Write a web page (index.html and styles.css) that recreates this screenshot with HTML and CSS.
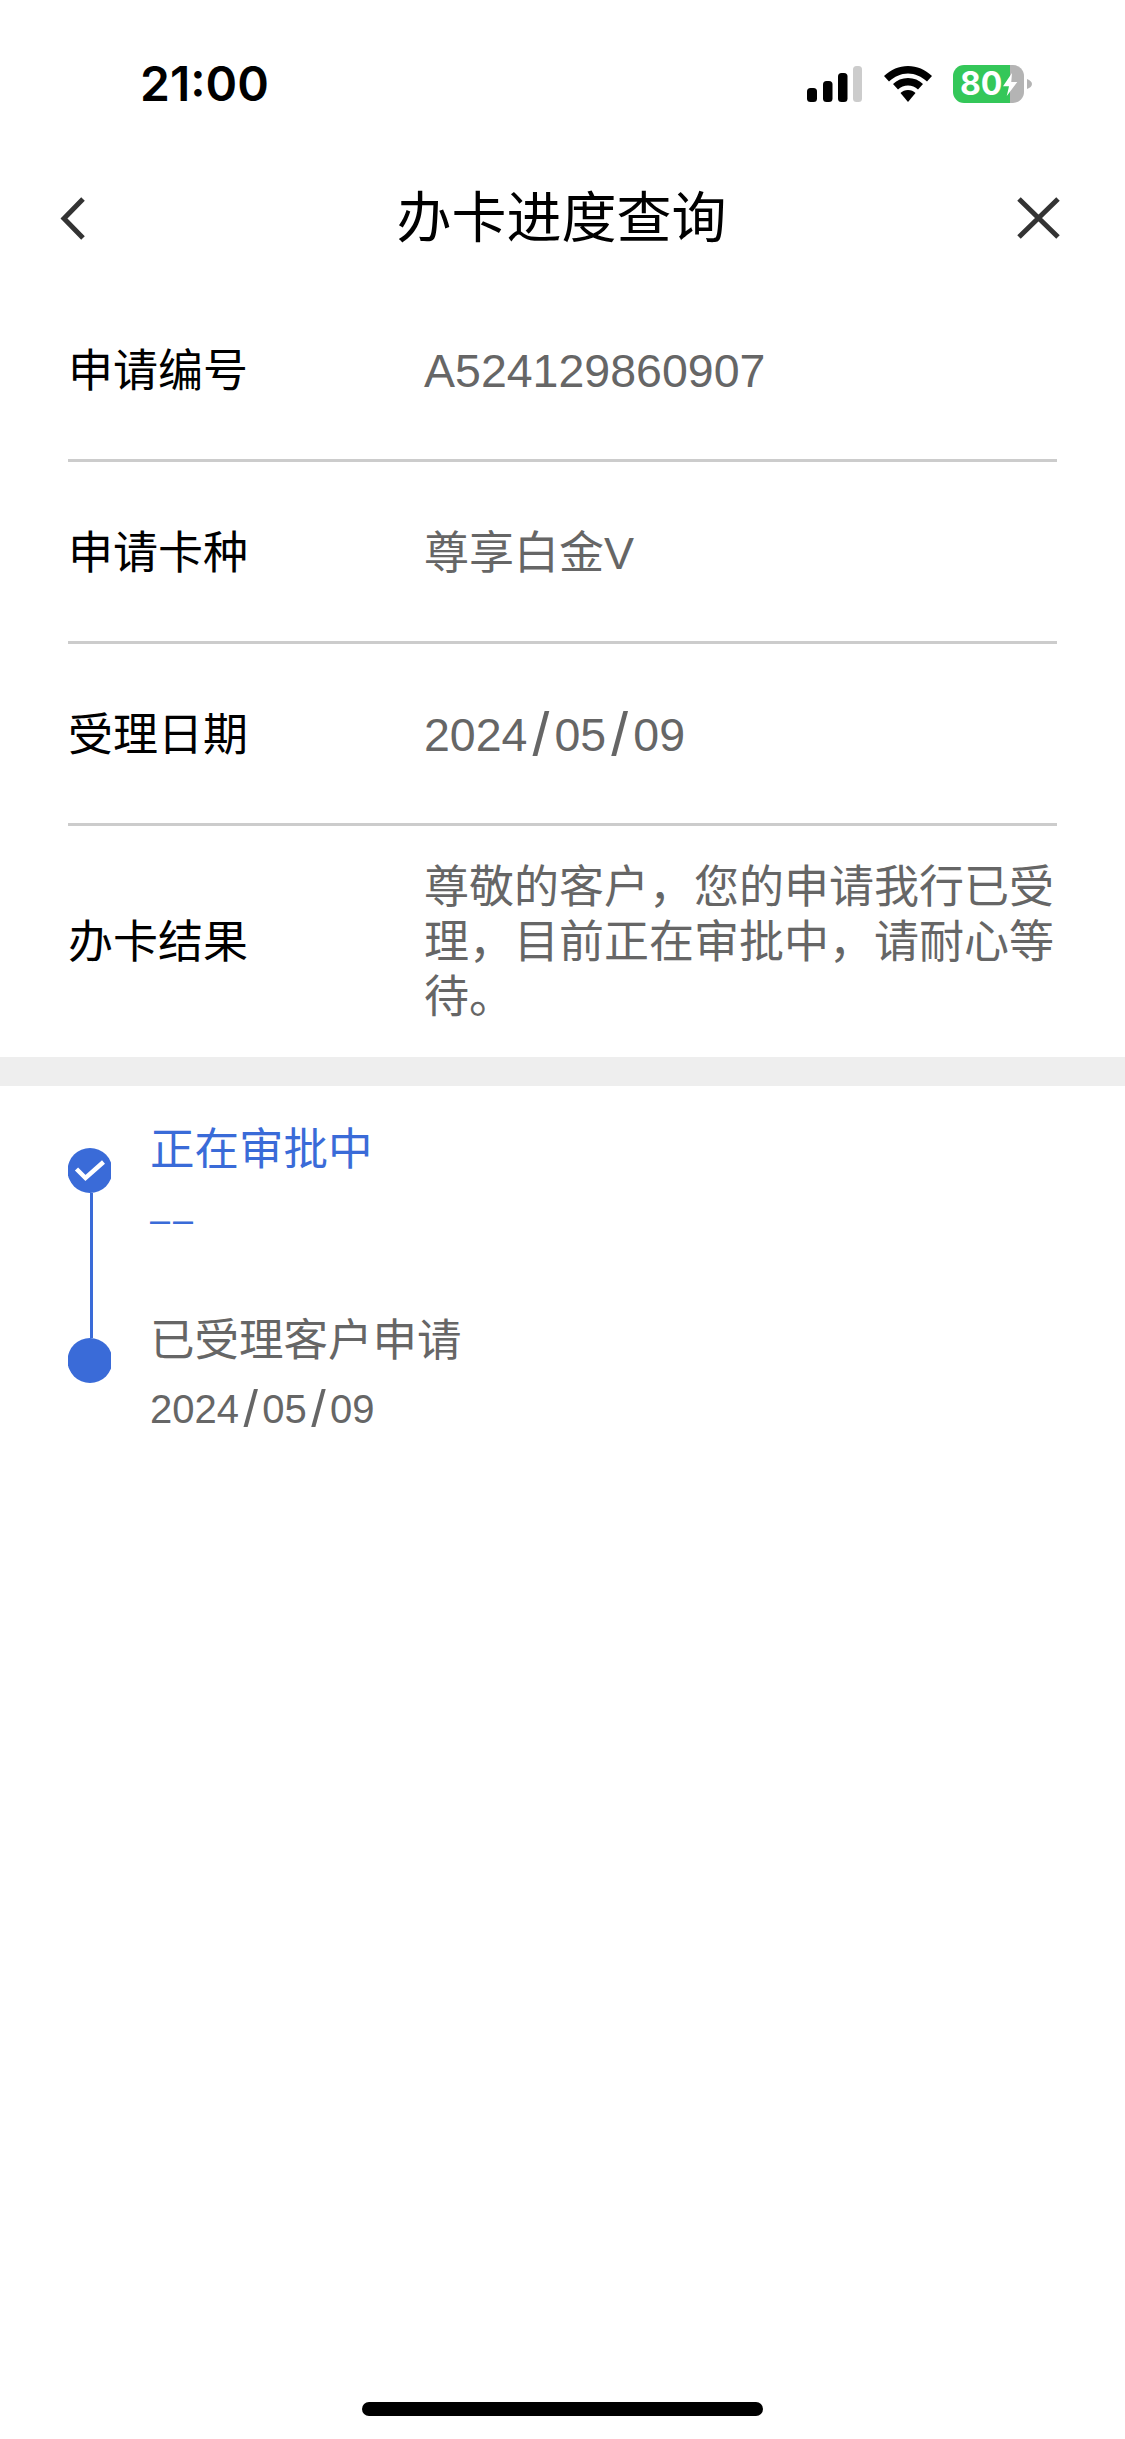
FILE: index.html
```html
<!DOCTYPE html>
<html lang="zh-CN">
<head>
<meta charset="utf-8">
<title>办卡进度查询</title>
<link rel="stylesheet" href="styles.css">
</head>
<body>
<div class="app">
  <div class="status">
    <span class="time">21:00</span>
    <div class="status-icons">
      <svg class="signal" width="55" height="36" viewBox="0 0 55 36"><rect x="0" y="22" width="10" height="14" rx="3.5" fill="#000"/><rect x="16" y="15" width="9.500" height="21" rx="3.500" fill="#000"/><rect x="31" y="7" width="9.500" height="29" rx="3.500" fill="#000"/><rect x="46" y="0" width="9" height="36" rx="3.500" fill="#ccc"/></svg>
      <svg class="wifi" width="48" height="36" viewBox="0 0 48 36"><path d="M24 0C15 0 7 3.500 0 10l5 5.500C10.500 10.500 17 7.500 24 7.500s13.500 3 19 8l5-5.500C41 3.500 33 0 24 0z" fill="#000"/><path d="M24 12c-6 0-11 2.300-15 6l5 5.500c2.800-2.600 6.200-4 10-4s7.200 1.400 10 4l5-5.500c-4-3.700-9-6-15-6z" fill="#000"/><path d="M24 24c-3 0-5.500 1.100-7.500 3L24 36l7.500-9c-2-1.900-4.500-3-7.500-3z" fill="#000"/></svg>
      <div class="battery">
        <div class="battery-body"><span class="battery-level">80</span><svg class="bolt" width="15" height="23" viewBox="0 0 20 28" preserveAspectRatio="none"><path d="M12 0L0 16h8l-3 12L19 11h-8z" fill="#fff"/></svg></div>
        <svg class="battery-nub" width="5" height="10" viewBox="0 0 5 10"><path d="M0 0c3 1 5 3 5 5s-2 4-5 5z" fill="#b4b4b4"/></svg>
      </div>
    </div>
  </div>
  <header class="nav">
    <svg class="nav-icon" width="25" height="43" viewBox="0 0 25 43"><path d="M23 2L4 21.500 23 41" fill="none" stroke="#333" stroke-width="5"/></svg>
    <h1 class="nav-title">办卡进度查询</h1>
    <svg class="nav-icon nav-close" width="43" height="42" viewBox="0 0 43 42"><path d="M2 2l39 38M41 2L2 40" fill="none" stroke="#333" stroke-width="5"/></svg>
  </header>
  <section class="details">
    <div class="row"><div class="label">申请编号</div><div class="value num">A524129860907</div></div>
    <div class="row"><div class="label">申请卡种</div><div class="value">尊享白金V</div></div>
    <div class="row"><div class="label">受理日期</div><div class="value num">2024<span class="slash">/</span>05<span class="slash">/</span>09</div></div>
    <div class="row row-last"><div class="label">办卡结果</div><div class="value">尊敬的客户，您的申请我行已受理，目前正在审批中，请耐心等待。</div></div>
  </section>
  <div class="band"></div>
  <section class="timeline">
    <div class="step step-active">
      <div class="rail">
        <svg class="dot" width="43" height="45" viewBox="0 0 43 45"><circle cx="22" cy="22.500" r="22.500" fill="#3a6bd8"/><path d="M8.500 21l9 9L35.500 14" fill="none" stroke="#fff" stroke-width="4.500"/></svg>
        <div class="connector"></div>
      </div>
      <div class="step-text">
        <div class="step-title">正在审批中</div>
        <div class="step-date step-dash">––</div>
      </div>
    </div>
    <div class="step">
      <div class="rail">
        <div class="connector connector-stub"></div>
        <svg class="dot" width="43" height="45" viewBox="0 0 43 45"><circle cx="22" cy="22.500" r="22.500" fill="#3a6bd8"/></svg>
      </div>
      <div class="step-text">
        <div class="step-title">已受理客户申请</div>
        <div class="step-date step-num">2024<span class="slash">/</span>05<span class="slash">/</span>09</div>
      </div>
    </div>
  </section>
  <div class="home-indicator"></div>
</div>
</body>
</html>
```
FILE: styles.css
```css
* { box-sizing: border-box; margin: 0; padding: 0; }
html, body { background: #fff; }
body { font-family: "Liberation Sans", "Noto Sans CJK SC", sans-serif; }
.app { width: 1125px; height: 2439px; display: flex; flex-direction: column; overflow: hidden; background: #fff; }

.status { height: 168px; padding: 0 93px 0 140px; display: flex; align-items: center; justify-content: space-between; flex-shrink: 0; }
.time { font-family: Inter, sans-serif; font-size: 48px; font-weight: 600; color: #000; line-height: 1; }
.status-icons { display: flex; align-items: center; }
.signal { margin-right: 22px; }
.wifi { margin-right: 21px; }
.battery { display: flex; align-items: center; gap: 3px; }
.battery-body { width: 71px; height: 38px; border-radius: 11px; background: linear-gradient(90deg, #34c759 0, #34c759 57px, #b4b4b4 57px); display: flex; align-items: center; padding-left: 7px; }
.battery-level { font-family: Inter, sans-serif; font-size: 32px; font-weight: 700; color: #fff; line-height: 1; }
.bolt { margin-left: 1px; flex-shrink: 0; }

.nav { height: 100px; margin-bottom: 12px; padding: 0 65px 0 60px; display: grid; grid-template-columns: 1fr auto 1fr; align-items: center; flex-shrink: 0; }
.nav-close { justify-self: end; }
.nav-title { font-size: 55px; font-weight: 400; color: #000; line-height: 1; margin-left: 3px; }

.details { padding: 0 68px; }
.row { height: 182px; padding-top: 3px; display: flex; align-items: center; border-bottom: 3px solid #ccc; }
.row-last { height: 231px; padding-top: 2px; border-bottom: 0; }
.label { width: 356px; flex-shrink: 0; font-size: 45px; color: #000; line-height: 55px; }
.value { flex: 1; font-size: 45px; color: #666; line-height: 55px; }
.num { font-size: 46.500px; }
.slash { font-size: 1.300em; line-height: 0; vertical-align: -.08em; margin: 0 .085em; }

.band { height: 29px; background: #eee; flex-shrink: 0; }

.timeline { padding: 35px 68px 0; display: flex; flex-direction: column; }
.step { display: flex; }
.step-active { height: 191px; }
.rail { width: 82px; display: flex; flex-direction: column; align-items: flex-start; flex-shrink: 0; }
.step-active .rail { padding-top: 27px; }
.dot { display: block; flex-shrink: 0; }
.connector { width: 3px; flex: 1; margin-left: 21.500px; background: #3a6bd8; }
.connector-stub { flex: none; height: 26px; }
.step-title { font-size: 44.500px; line-height: 58px; color: #666; }
.step-date { font-size: 40px; line-height: 50px; margin-top: 14px; color: #666; }
.step-dash { font-size: 36px; letter-spacing: 3px; margin-top: 16px; }
.step-active .step-title, .step-active .step-date { color: #3a6bd8; }

.home-indicator { width: 401px; height: 14px; margin: auto auto 23px; border-radius: 7px; background: #000; flex-shrink: 0; }
```
